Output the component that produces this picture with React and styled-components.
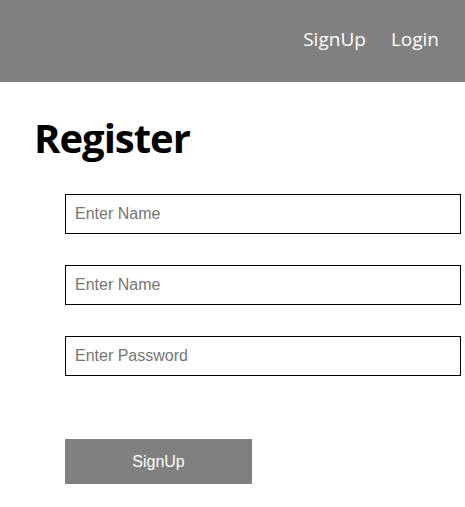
import React from "react";
import styled, { createGlobalStyle } from "styled-components";

const GlobalStyle = createGlobalStyle`
  body {
    margin: 0;
    background: #fff;
    font-family: "Open Sans", "Noto Sans", sans-serif;
  }
`;

const Header = styled.div`
  height: 82px;
  background-color: #808080;
  display: flex;
  justify-content: flex-end;
  align-items: center;
  gap: 25px;
  padding-right: 26px;
`;

const NavItem = styled.a`
  color: white;
  font-size: 19px;
  text-decoration: none;
  cursor: pointer;
  margin-bottom: 4px;
`;

const Title = styled.h1`
  margin: 28px 0 0 34px;
  font-size: 40px;
  font-weight: 700;
  letter-spacing: -1px;
  color: #000;
`;

const Form = styled.div`
  margin: 29px 0 0 65px;
  display: flex;
  flex-direction: column;
  gap: 31px;
`;

const Input = styled.input`
  box-sizing: border-box;
  width: 396px;
  height: 40px;
  border: 1px solid #000;
  padding: 0 9px;
  font-family: "Liberation Sans", Arial, sans-serif;
  font-size: 16px;
  outline: none;
  &::placeholder {
    color: #757575;
  }
`;

const Button = styled.button`
  margin-top: 32px;
  width: 187px;
  height: 45px;
  background-color: #808080;
  color: white;
  border: none;
  font-family: "Liberation Sans", Arial, sans-serif;
  font-size: 16px;
  cursor: pointer;
`;

const App = () => {
  return (
    <>
      <GlobalStyle />
      <Header>
        <NavItem>SignUp</NavItem>
        <NavItem>Login</NavItem>
      </Header>
      <Title>Register</Title>
      <Form>
        <Input type="text" placeholder="Enter Name" />
        <Input type="text" placeholder="Enter Name" />
        <Input type="password" placeholder="Enter Password" />
        <div>
          <Button>SignUp</Button>
        </div>
      </Form>
    </>
  );
};

export default App;
